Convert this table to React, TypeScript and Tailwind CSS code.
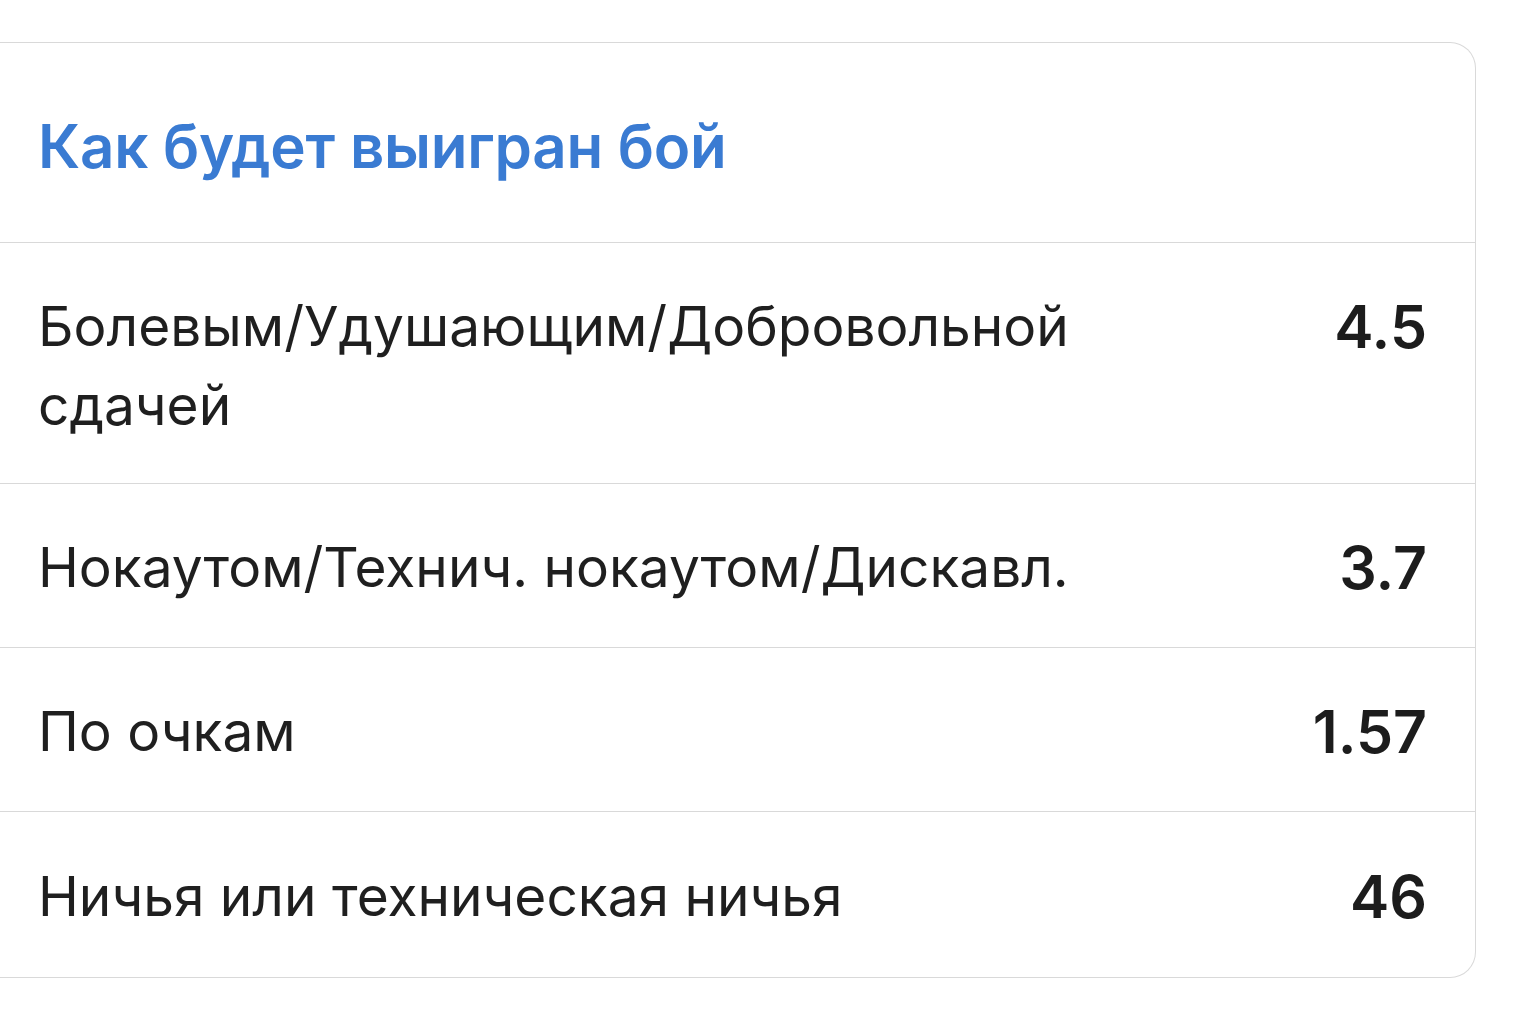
import React from 'react'

const rows = [
  { label: 'Болевым/Удушающим/Добровольной сдачей', value: '4.5', pad: 'pt-[44px] pb-[38px]' },
  { label: 'Нокаутом/Технич. нокаутом/Дискавл.', value: '3.7', pad: 'pt-[44px] pb-[40px]' },
  { label: 'По очкам', value: '1.57', pad: 'pt-[44px] pb-[40px]' },
  { label: 'Ничья или техническая ничья', value: '46', pad: 'pt-[45px] pb-[41px]' },
]

export default function App() {
  return (
    <div className="min-h-screen bg-white pt-[42px]" style={{ fontFamily: 'Inter, "Noto Sans", sans-serif' }}>
      {/* Card */}
      <div className="w-[1476px] border border-l-0 border-[#d9d9d9] rounded-r-[26px] bg-white">
        {/* Header */}
        <div className="h-[200px] flex items-center pl-[38px] pt-[6px] border-b border-[#d9d9d9]">
          <h2 className="text-[60px] font-semibold text-[#3a7bd2] tracking-[-0.25px]">Как будет выигран бой</h2>
        </div>

        {rows.map((row, i) => (
          <div
            key={row.label}
            className={`flex items-start justify-between pl-[38px] pr-[48px] ${row.pad} ${i < rows.length - 1 ? 'border-b border-[#d9d9d9]' : ''}`}
          >
            <div className="max-w-[1100px] text-[55px] leading-[79px] text-[#1f1f1f]">{row.label}</div>
            <div className="text-[59px] leading-[79px] font-semibold text-[#1c1c1c]">{row.value}</div>
          </div>
        ))}
      </div>
    </div>
  )
}
